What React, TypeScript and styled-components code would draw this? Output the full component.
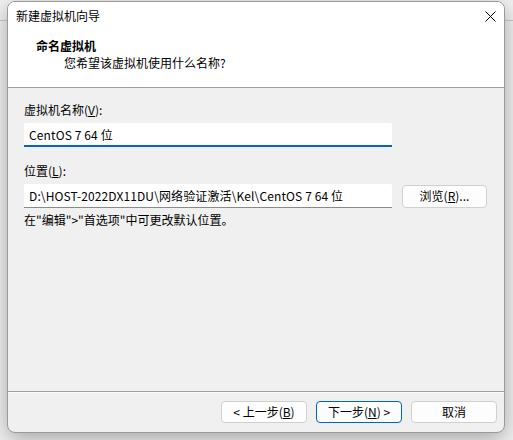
import React from "react";
import styled, { createGlobalStyle } from "styled-components";

const Global = createGlobalStyle`
  html, body { margin: 0; padding: 0; }
  body {
    width: 513px;
    height: 440px;
    overflow: hidden;
    background:
      linear-gradient(to bottom, transparent 20px, #c9c9c9 20px, #c9c9c9 21px, transparent 21px),
      #f2f2f2;
    font-family: "Noto Sans CJK SC", "Noto Sans", sans-serif;
    font-size: 12px;
    color: #000;
  }
`;

const Win = styled.div`
  margin: 1px 0 0 7px;
  width: 498px;
  height: 432px;
  box-sizing: border-box;
  border: 1px solid #9a9a9a;
  border-radius: 8px;
  background: #f0f0f0;
  overflow: hidden;
  display: flex;
  flex-direction: column;
  box-shadow: 0 6px 22px rgba(0, 0, 0, 0.32);
`;

const TitleBar = styled.div`
  height: 29px;
  flex: none;
  background: #fff;
  display: flex;
  align-items: center;
  justify-content: space-between;
  padding: 0 0 1px 8px;
  box-sizing: border-box;
`;

const Title = styled.span`
  font-size: 12px;
  line-height: 14px;
`;

const Close = styled.div`
  width: 28px;
  height: 22px;
  display: flex;
  align-items: center;
  justify-content: center;
`;

const Header = styled.div`
  height: 57px;
  flex: none;
  background: #fff;
  border-bottom: 1px solid #a0a0a0;
  padding: 6px 0 0 28px;
  box-sizing: border-box;
  display: flex;
  flex-direction: column;
`;

const HeaderTitle = styled.div`
  font-weight: bold;
  font-size: 12px;
  line-height: 17px;
`;

const HeaderSub = styled.div`
  padding-left: 28px;
  line-height: 17px;
`;

const Body = styled.div`
  flex: 1;
  padding: 14px 16px 0 16px;
  display: flex;
  flex-direction: column;
  border-bottom: 1px solid #a0a0a0;
`;

const Label = styled.div`
  line-height: 16px;
  margin-bottom: 5px;
`;

const Row = styled.div<{ $gap?: number }>`
  display: flex;
  align-items: center;
  gap: 10px;
  margin-bottom: ${(p) => p.$gap ?? 0}px;
`;

const Field = styled.div<{ $focus?: boolean }>`
  width: 368px;
  height: 24px;
  box-sizing: border-box;
  background: #fff;
  border-radius: 2px 2px 0 0;
  border-bottom: ${(p) => (p.$focus ? "2px solid #0067c0" : "1px solid #8a8a8a")};
  padding: 0 5px;
  display: flex;
  align-items: center;
  font-size: 12px;
  letter-spacing: 0.12px;
  white-space: nowrap;
  overflow: hidden;
`;

const Note = styled.div`
  margin-top: 4px;
  line-height: 16px;
`;

const Footer = styled.div`
  height: 40px;
  flex: none;
  border-top: 1px solid #fbfbfb;
  box-sizing: border-box;
  display: flex;
  align-items: center;
  justify-content: flex-end;
  padding: 0 7px 2px 0;
  gap: 9px;
`;

const Btn = styled.button<{ $primary?: boolean }>`
  width: 86px;
  height: 22px;
  box-sizing: border-box;
  background: #fdfdfd;
  border: 1px solid ${(p) => (p.$primary ? "#0067c0" : "#d0d0d0")};
  border-radius: 4px;
  font-family: "Noto Sans CJK SC", "Noto Sans", sans-serif;
  font-size: 12px;
  color: #000;
  padding: 0;
  display: flex;
  align-items: center;
  justify-content: center;
  line-height: 14px;
`;

const BrowseBtn = styled(Btn)`
  width: 85px;
  height: 23px;
`;

export default function App() {
  return (
    <>
      <Global />
      <Win>
        <TitleBar>
          <Title>新建虚拟机向导</Title>
          <Close>
            <svg width="11" height="11" viewBox="0 0 11 11">
              <path d="M0.5 0.5 L10.5 10.5 M10.5 0.5 L0.5 10.5" stroke="#000" strokeWidth="1" />
            </svg>
          </Close>
        </TitleBar>
        <Header>
          <HeaderTitle>命名虚拟机</HeaderTitle>
          <HeaderSub>您希望该虚拟机使用什么名称?</HeaderSub>
        </Header>
        <Body>
          <Label>
            虚拟机名称(<u>V</u>):
          </Label>
          <Row $gap={16}>
            <Field $focus>CentOS 7 64 位</Field>
          </Row>
          <Label>
            位置(<u>L</u>):
          </Label>
          <Row>
            <Field>D:\HOST-2022DX11DU\网络验证激活\Kel\CentOS 7 64 位</Field>
            <BrowseBtn>
              浏览(<u>R</u>)...
            </BrowseBtn>
          </Row>
          <Note>在"编辑"&gt;"首选项"中可更改默认位置。</Note>
        </Body>
        <Footer>
          <Btn>
            &lt; 上一步(<u>B</u>)
          </Btn>
          <Btn $primary>
            下一步(<u>N</u>) &gt;
          </Btn>
          <Btn>取消</Btn>
        </Footer>
      </Win>
    </>
  );
}
